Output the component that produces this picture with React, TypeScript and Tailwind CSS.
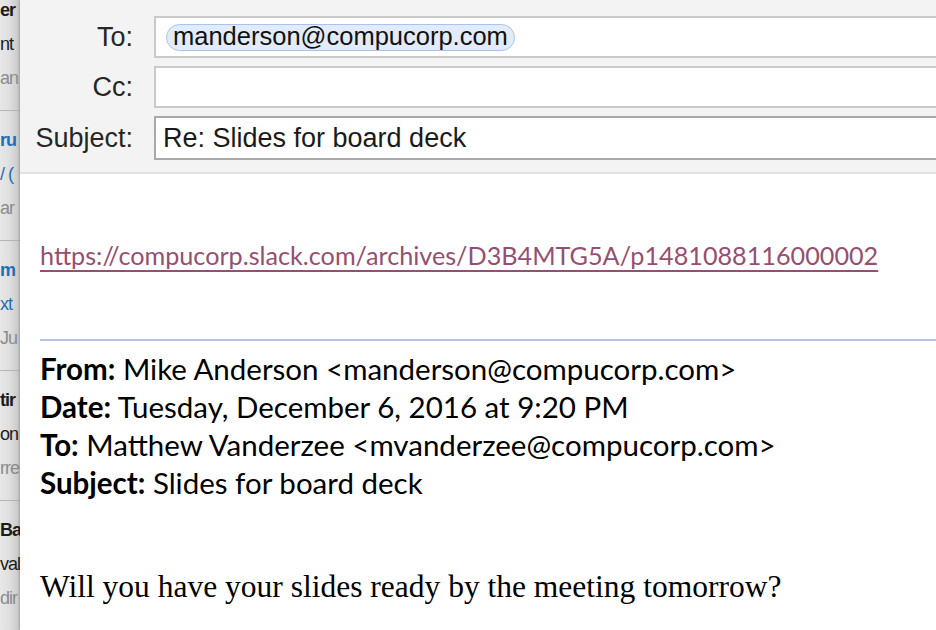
import React from "react";

const listGroups = [
  [
    { text: "er", tone: "title" },
    { text: "nt", tone: "dark" },
    { text: "an", tone: "muted" },
  ],
  [
    { text: "ru", tone: "link" },
    { text: "/ (", tone: "linkSoft" },
    { text: "ar", tone: "muted" },
  ],
  [
    { text: "m", tone: "link" },
    { text: "xt", tone: "linkSoft" },
    { text: "Ju", tone: "muted" },
  ],
  [
    { text: "tir", tone: "title" },
    { text: "on", tone: "dark" },
    { text: "rre", tone: "muted" },
  ],
  [
    { text: "Ba", tone: "title" },
    { text: "val", tone: "dark" },
    { text: "dir", tone: "muted" },
  ],
];

const toneClass: Record<string, string> = {
  title: "text-[#1c1c1c] font-semibold",
  dark: "text-[#1c1c1c]",
  link: "text-[#1d6fba] font-semibold",
  linkSoft: "text-[#1d6fba]",
  muted: "text-[#8c8c8c]",
};

function MessageListEdge() {
  return (
    <aside className="h-full w-[20px] shrink-0 overflow-hidden bg-gradient-to-r from-[#e8e8e8] via-[#dedede] to-[#c6c6c6]">
      <div className="-mt-[19px] flex flex-col">
        {listGroups.map((group, i) => (
          <div key={i} className="h-[130px] border-b border-[#b4b4b4] pt-[12px]">
            {group.map((line, j) => (
              <div
                key={j}
                className={`flex h-[34px] items-center whitespace-nowrap text-[18px] leading-[34px] tracking-[-1px] ${toneClass[line.tone]}`}
              >
                {line.text}
              </div>
            ))}
          </div>
        ))}
      </div>
    </aside>
  );
}

function HeaderRow({
  label,
  children,
  tall,
  focused,
}: {
  label: string;
  children?: React.ReactNode;
  tall?: boolean;
  focused?: boolean;
}) {
  return (
    <div className="flex items-center">
      <div className="w-[113px] shrink-0 text-right text-[27px] text-[#262626]">{label}</div>
      <div
        className={`ml-[21px] flex flex-1 items-center border-y-2 border-l-2 bg-white ${
          tall ? "h-[44px]" : "h-[42px]"
        } ${focused ? "border-[#a9a9a9]" : "border-[#c9c9c9]"}`}
      >
        {children}
      </div>
    </div>
  );
}

export default function App() {
  return (
    <div
      className="flex h-[630px] w-[936px] overflow-hidden bg-white"
      style={{ fontFamily: "'Liberation Sans', Arial, sans-serif" }}
    >
      <MessageListEdge />
      <main className="relative z-10 flex min-w-0 flex-1 flex-col bg-white shadow-[-1px_0_2px_rgba(0,0,0,0.18)]">
        <header className="flex h-[174px] shrink-0 flex-col gap-[8px] border-b-2 border-[#e2e2e2] bg-[#f3f3f3] pt-[16px]">
          <HeaderRow label="To:">
            <span className="ml-[10px] flex h-[27px] items-center rounded-full border-[1.5px] border-[#a7c4ee] bg-[#e2ebfa] px-[6px] text-[25.5px] leading-none text-[#111]">
              manderson@compucorp.com
            </span>
          </HeaderRow>
          <HeaderRow label="Cc:" />
          <HeaderRow label="Subject:" tall focused>
            <span className="pl-[7px] text-[27px] text-[#1a1a1a]">Re: Slides for board deck</span>
          </HeaderRow>
        </header>

        <section className="flex-1 pl-[20px] pt-[63px]" style={{ fontFamily: "Lato, 'Open Sans', sans-serif" }}>
          <a className="block whitespace-nowrap text-[25.2px] leading-[36px] text-[#954f72] underline decoration-[2px] underline-offset-[5px]">
            https://compucorp.slack.com/archives/D3B4MTG5A/p1481088116000002
          </a>

          <div className="mt-[66px] border-t-2 border-[#b5c4df] pt-[9px] text-[29.5px] leading-[38px] text-black">
            <div className="whitespace-nowrap">
              <b>From:</b> Mike Anderson &lt;manderson@compucorp.com&gt;
            </div>
            <div className="whitespace-nowrap">
              <b>Date:</b> Tuesday, December 6, 2016 at 9:20 PM
            </div>
            <div className="whitespace-nowrap">
              <b>To:</b> Matthew Vanderzee &lt;mvanderzee@compucorp.com&gt;
            </div>
            <div className="whitespace-nowrap">
              <b>Subject:</b> Slides for board deck
            </div>
          </div>

          <p
            className="mt-[68px] whitespace-nowrap text-[31.5px] leading-[34px] text-black"
            style={{ fontFamily: "'Liberation Serif', 'Times New Roman', serif" }}
          >
            Will you have your slides ready by the meeting tomorrow?
          </p>
        </section>
      </main>
    </div>
  );
}
